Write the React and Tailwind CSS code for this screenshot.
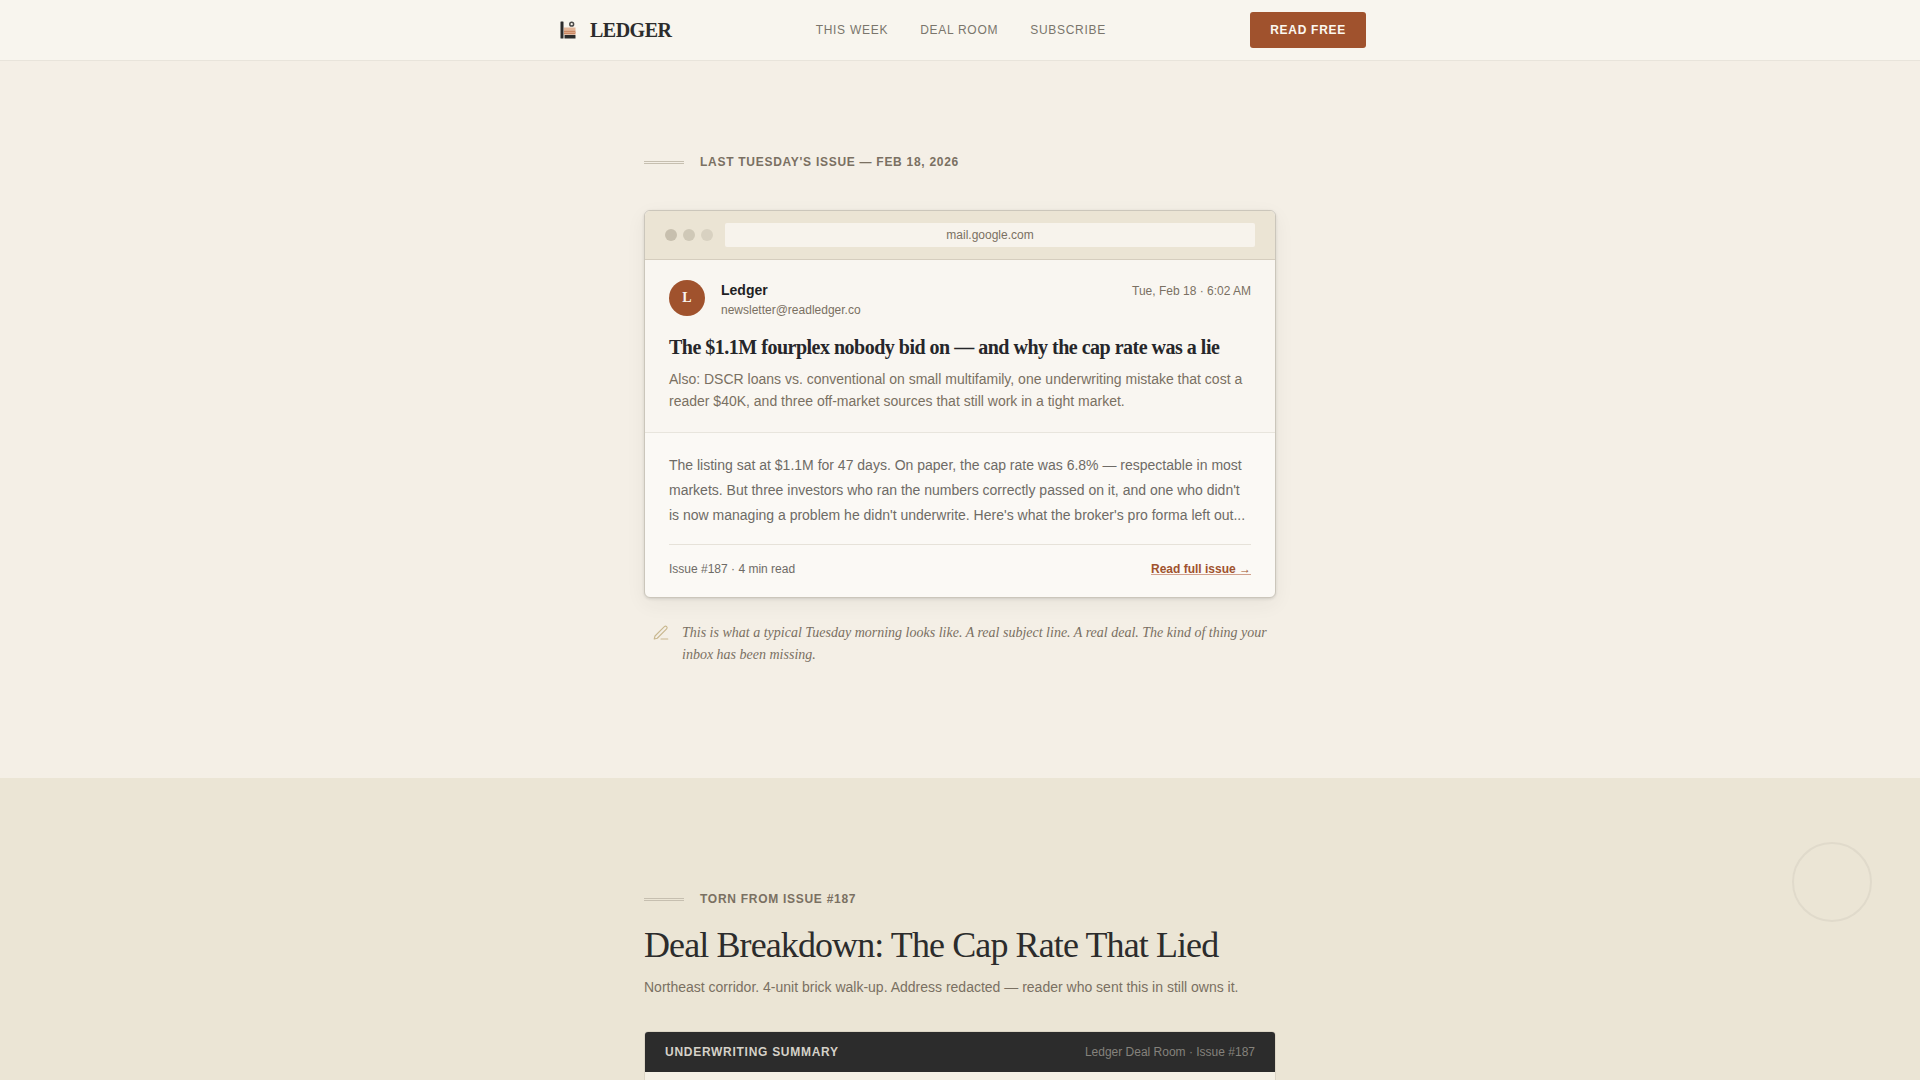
const sans = "font-['Liberation_Sans',Arial,sans-serif]";

function Logo() {
  return (
    <svg className="size-7" viewBox="0 0 28 28" fill="none" aria-hidden="true">
      <rect x="6.5" y="5.5" width="3" height="17" rx="0.5" fill="#2c2c2c" />
      <rect x="10" y="11.5" width="11.5" height="3" fill="#e3b597" />
      <rect x="10" y="14.5" width="11.5" height="4" fill="#c98763" />
      <rect x="10" y="16" width="11.5" height="1" fill="#dca585" />
      <rect x="10.5" y="19" width="11" height="3.5" rx="0.3" fill="#2c2c2c" />
      <circle cx="17.7" cy="8.2" r="1.9" stroke="#4a4a48" strokeWidth="1.5" />
    </svg>
  );
}

function SectionLabel({ children }) {
  return (
    <div className="flex items-center gap-4">
      <span className="h-[3px] w-10 border-y border-[#c6bfb0]" />
      <span className="text-xs font-bold uppercase tracking-[0.06em] text-[#7a7062]">{children}</span>
    </div>
  );
}

function EmailPreview() {
  return (
    <article className="overflow-hidden rounded-md border border-[#cbc6bb] bg-[#fbf9f5] shadow-[0_1px_3px_rgba(44,44,44,0.14),0_6px_20px_rgba(44,44,44,0.06)]">
      <div className="flex items-center gap-3 border-b border-[#d5cdbe] bg-[#ebe4d4] px-5 py-3">
        <div className="flex gap-1.5" aria-hidden="true">
          <span className="size-3 rounded-full bg-[#c7bfae]" />
          <span className="size-3 rounded-full bg-[#cfc8b7]" />
          <span className="size-3 rounded-full bg-[#d8d1c1]" />
        </div>
        <div className="flex-1 rounded-xs bg-[#f7f3ec] text-center text-xs leading-6 text-[#7a7062]">
          mail.google.com
        </div>
      </div>
      <header className="border-b border-[#e8e5dd] bg-[#f9f6f1] px-6 pt-5 pb-5">
        <div className="flex items-start gap-4">
          <span className="flex size-9 items-center justify-center rounded-full bg-[#a0522d] font-['Liberation_Serif',serif] text-sm font-bold text-[#f8f5ee]">
            L
          </span>
          <div className="flex-1">
            <p className="text-sm leading-5 font-bold text-[#1f1f24]">Ledger</p>
            <p className="text-xs leading-5 text-[#7a7062]">newsletter@readledger.co</p>
          </div>
          <time className="text-xs leading-[22px] text-[#7a7062]">Tue, Feb 18 · 6:02 AM</time>
        </div>
        <h2 className="mt-3.5 font-['Liberation_Serif',serif] text-xl leading-[26px] font-bold tracking-tight text-[#26262a]">
          The $1.1M fourplex nobody bid on — and why the cap rate was a lie
        </h2>
        <p className="mt-2 text-sm leading-[22px] text-[#7a7062]">
          Also: DSCR loans vs. conventional on small multifamily, one underwriting mistake that cost a reader $40K, and
          three off-market sources that still work in a tight market.
        </p>
      </header>
      <div className="px-6 pt-5 pb-5">
        <p className="text-sm leading-[25px] text-[#6e6b66]">
          The listing sat at $1.1M for 47 days. On paper, the cap rate was 6.8% — respectable in most markets. But three
          investors who ran the numbers correctly passed on it, and one who didn't is now managing a problem he didn't
          underwrite. Here's what the broker's pro forma left out...
        </p>
        <footer className="mt-4 flex items-center justify-between border-t border-[#e6e2d9] pt-4 text-xs leading-4">
          <span className="text-[#6e6b66]">Issue #187 · 4 min read</span>
          <a href="#issue-187" className="font-bold text-[#a0522d] underline decoration-[#d0a08c] underline-offset-1">
            Read full issue →
          </a>
        </footer>
      </div>
    </article>
  );
}

export default function App() {
  return (
    <div className={`flex h-screen flex-col overflow-hidden bg-[#f4efe6] ${sans}`}>
      <nav className="border-b border-[#e8e4db] bg-[#f8f5ee]">
        <div className="mx-auto flex w-full max-w-[860px] items-center justify-between px-6 py-3">
          <a
            href="#top"
            className="flex items-center gap-2 font-['Liberation_Serif',serif] text-xl font-bold tracking-tight text-[#2c2c2c]"
          >
            <Logo />
            LEDGER
          </a>
          <div className="flex gap-8 text-xs uppercase tracking-[0.06em] text-[#7a756c]">
            <a href="#week">This Week</a>
            <a href="#deal">Deal Room</a>
            <a href="#subscribe">Subscribe</a>
          </div>
          <button className="rounded-[3px] bg-[#a0522d] px-5 py-2.5 text-xs leading-4 font-bold uppercase tracking-[0.06em] text-[#fbf8f1]">
            Read Free
          </button>
        </div>
      </nav>

      <section id="week" className="pt-[93px] pb-[112px]">
        <div className="mx-auto w-full max-w-[680px] px-6">
          <SectionLabel>Last Tuesday's Issue — Feb 18, 2026</SectionLabel>
          <div className="mt-10">
            <EmailPreview />
          </div>
          <div className="mt-6 flex items-start gap-3 px-2">
            <svg
              className="mt-0.5 size-[18px] shrink-0"
              viewBox="0 0 24 24"
              fill="none"
              stroke="#c9b88f"
              strokeWidth="1.5"
              strokeLinecap="round"
              strokeLinejoin="round"
              aria-hidden="true"
            >
              <path d="M12 20h9" />
              <path d="M16.5 3.5a2.12 2.12 0 0 1 3 3L7 19l-4 1 1-4Z" />
            </svg>
            <p className="font-['Liberation_Serif',serif] text-sm leading-[22px] text-[#7a7062] italic">
              This is what a typical Tuesday morning looks like. A real subject line. A real deal. The kind of thing
              your inbox has been missing.
            </p>
          </div>
        </div>
      </section>

      <section id="deal" className="relative flex-1 bg-[#ebe5d5] pt-[113px]">
        <span
          className="absolute top-16 right-12 size-20 rounded-full border-2 border-[#e0dacb]"
          aria-hidden="true"
        />
        <div className="mx-auto w-full max-w-[680px] px-6">
          <SectionLabel>Torn from Issue #187</SectionLabel>
          <h1 className="mt-4 font-['Liberation_Serif',serif] text-4xl leading-[44px] tracking-tight text-[#2c2c2c]">
            Deal Breakdown: The Cap Rate That Lied
          </h1>
          <p className="mt-2 text-sm leading-6 text-[#7a7062]">
            Northeast corridor. 4-unit brick walk-up. Address redacted — reader who sent this in still owns it.
          </p>
          <article className="mt-8 overflow-hidden rounded-sm border border-[#dcd5c5] bg-[#f5f1e6]">
            <header className="flex items-center justify-between bg-[#2c2c2c] px-5 py-3 text-xs leading-4">
              <h2 className="font-bold uppercase tracking-[0.06em] text-[#d5d1c8]">Underwriting Summary</h2>
              <span className="text-[#85827c]">Ledger Deal Room · Issue #187</span>
            </header>
            <div className="h-10" />
          </article>
        </div>
      </section>
    </div>
  );
}
